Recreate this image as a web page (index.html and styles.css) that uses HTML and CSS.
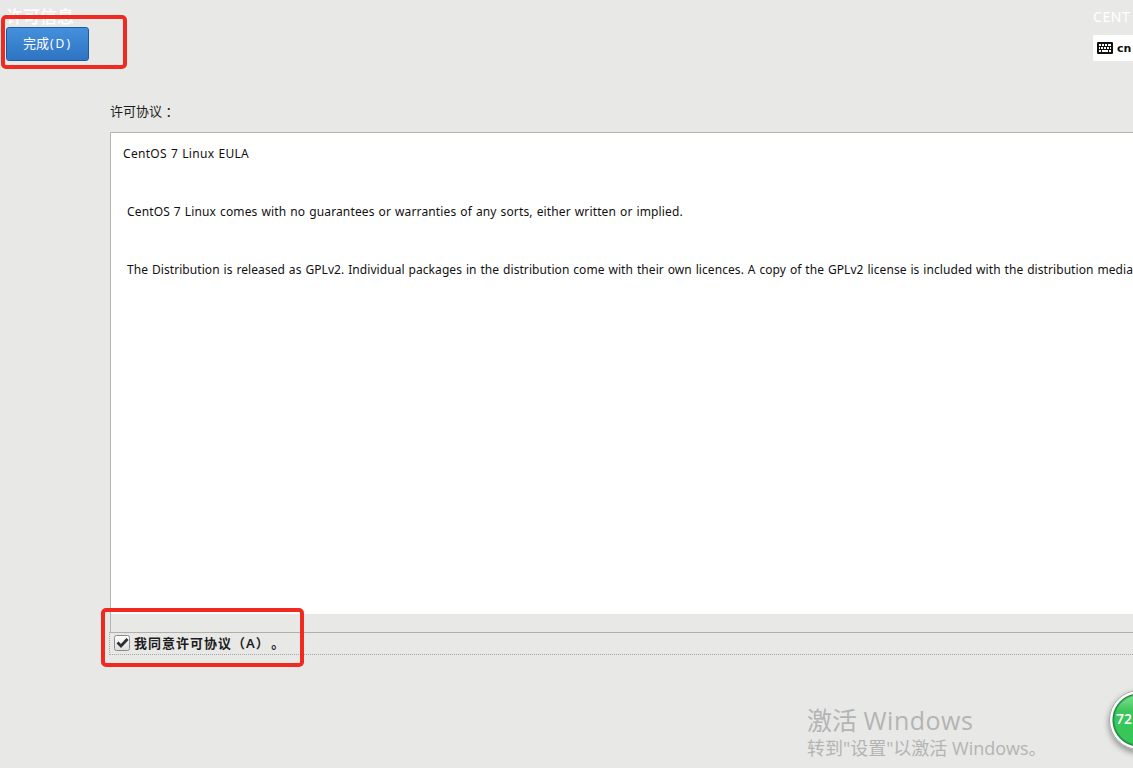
FILE: index.html
```html
<!DOCTYPE html>
<html lang="zh-CN">

<head>
    <meta charset="UTF-8">
    <meta name="viewport" content="width=device-width, initial-scale=1.0">
    <title>许可信息</title>
    <link rel="stylesheet" href="styles.css">
</head>

<body>
    <header class="top-bar">
        <div class="top-left">
            <h1>许可信息</h1>
            <button class="done-button">完成<span>(D)</span></button>
        </div>
        <div class="top-right">
            <div class="product">CENT</div>
            <div class="keyboard">
                <svg width="16" height="12" viewBox="0 0 16 12">
                    <rect width="16" height="12" rx="1" fill="#111" />
                    <path d="M2 3h2M5 3h2M8 3h2M11 3h3M2 6h1M4 6h2M7 6h2M10 6h2M13 6h1M2 9h2M5 9h6M12 9h2" stroke="#fff" stroke-width="1.9" />
                </svg>
                <span>cn</span>
            </div>
        </div>
    </header>

    <main class="content">
        <label class="license-label">许可协议 ：</label>
        <div class="license-frame">
            <div class="license-text">
                <p class="line-title">CentOS 7 Linux EULA</p>
                <p class="line-warranty">CentOS 7 Linux comes with no guarantees or warranties of any sorts, either written or implied.</p>
                <p class="line-release">The Distribution is released as GPLv2. Individual packages in the distribution come with their own licences. A copy of the GPLv2 license is included with the distribution media</p>
            </div>
        </div>
        <div class="agree">
            <svg class="check" width="18" height="18" viewBox="0 0 18 18">
                <defs>
                    <linearGradient id="checkFill" x1="0" y1="0" x2="0" y2="1">
                        <stop offset="0" stop-color="#fff" />
                        <stop offset="1" stop-color="#dedede" />
                    </linearGradient>
                </defs>
                <rect x="1.5" y="1.5" width="15" height="15" rx="2" fill="url(#checkFill)" stroke="#8c8c8c" />
                <path d="M4.5 8.5L8 12L14.5 5" fill="none" stroke="#2b2f30" stroke-width="2.8" />
            </svg>
            <span class="agree-text">我同意许可协议（<span class="key">A</span>）<span class="stop">。</span></span>
        </div>
    </main>

    <div class="mark mark-done"></div>
    <div class="mark mark-agree"></div>

    <div class="watermark">
        <div class="watermark-title">激活 <span>Windows</span></div>
        <div class="watermark-text">转到"设置"以激活 Windows。</div>
    </div>

    <div class="speed-ball">72</div>
</body>

</html>
```
FILE: styles.css
```css
* {
    box-sizing: border-box;
}

body {
    position: relative;
    margin: 0;
    height: 768px;
    overflow: hidden;
    background-color: #e8e8e7;
    color: #1c1c1c;
    font-family: "Noto Sans", "Noto Sans CJK SC", sans-serif;
    font-size: 12px;
}

/* top bar */
.top-bar {
    display: flex;
    justify-content: space-between;
    height: 101px;
    padding: 6px 0 0 6px;
}

h1 {
    margin: 0;
    height: 21px;
    color: #fff;
    font-size: 17px;
    line-height: 21px;
    font-weight: 500;
}

.done-button {
    display: block;
    width: 83px;
    height: 34px;
    padding: 0 0 4px;
    border: 1px solid #1d5a9e;
    border-radius: 3px;
    background: linear-gradient(#4490dd, #2e74c3);
    color: #fff;
    font-family: inherit;
    font-size: 13px;
}

.done-button span {
    margin-left: 1px;
    font-size: 12px;
    letter-spacing: 2px;
}

.top-right {
    width: 40px;
    white-space: nowrap;
}

.product {
    height: 29px;
    color: #fff;
    font-size: 14px;
    line-height: 22px;
    letter-spacing: 0.6px;
}

.keyboard {
    display: flex;
    align-items: center;
    gap: 4px;
    height: 26px;
    padding-left: 4px;
    background-color: #fff;
    color: #111;
    font-family: "DejaVu Sans", sans-serif;
    font-size: 11px;
    font-weight: bold;
}

/* license */
.content {
    padding-left: 110px;
}

.license-label {
    display: block;
    height: 31px;
    font-size: 13px;
    line-height: 20px;
}

.license-frame {
    height: 500px;
    border-top: 1px solid #b4b4b0;
    border-left: 1px solid #b4b4b0;
}

.license-text {
    height: 481px;
    padding: 11px 0 0 12px;
    background-color: #fff;
    color: #111;
    white-space: nowrap;
    word-spacing: 0.7px;
}

.license-text p {
    margin: 0 0 38px;
    line-height: 20px;
}

.line-title {
    letter-spacing: 0.3px;
}

.license-text .line-warranty,
.license-text .line-release {
    padding-left: 4px;
    letter-spacing: 0.14px;
}

.license-text .line-release {
    letter-spacing: 0.07px;
}

.agree {
    display: flex;
    align-items: center;
    gap: 3px;
    height: 23px;
    margin-left: -1px;
    padding: 0 0 1px 3px;
    border-top: 1px solid #b0b0a9;
    border-bottom: 1px dotted #a5a5a5;
    border-left: 1px dotted #a5a5a5;
    font-size: 13px;
    font-weight: bold;
    letter-spacing: 1px;
}

.agree-text {
    padding-bottom: 2px;
}

.key {
    font-weight: 600;
}

.stop {
    margin-left: 8px;
}

/* red marks */
.mark {
    position: absolute;
    border: 4px solid #f02a20;
    border-radius: 5px;
}

.mark-done {
    left: 1px;
    top: 15px;
    width: 126px;
    height: 54px;
}

.mark-agree {
    left: 101px;
    top: 608px;
    width: 203px;
    height: 59px;
}

.watermark {
    position: absolute;
    left: 807px;
    top: 704px;
    color: #b4b4b4;
    font-family: "Open Sans", "Noto Sans CJK SC", sans-serif;
    white-space: nowrap;
}

.watermark-title {
    font-size: 25px;
    line-height: 32px;
}

.watermark-title span {
    letter-spacing: 0.5px;
}

.watermark-text {
    font-size: 18px;
    line-height: 24px;
}

.speed-ball {
    position: absolute;
    left: 1109px;
    top: 690px;
    width: 60px;
    height: 60px;
    padding-left: 6px;
    border: 1px solid #a8a8a8;
    border-radius: 50%;
    background: radial-gradient(circle at 50% 50%, transparent 24px, #168338 26px, #fff 27px), linear-gradient(#8fe59c, #3cc65c 35%, #35c656);
    box-shadow: 0 3px 6px rgba(0, 0, 0, 0.4);
    color: #fff;
    font-family: "Open Sans", sans-serif;
    font-size: 14px;
    font-weight: 600;
    line-height: 55px;
}
```
